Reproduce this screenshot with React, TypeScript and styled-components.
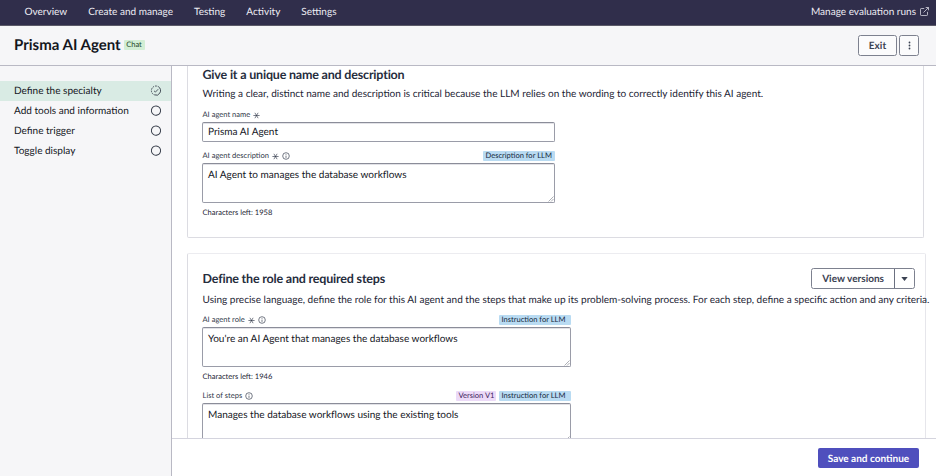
import React from "react";
import styled, { createGlobalStyle } from "styled-components";

const GlobalStyle = createGlobalStyle`
  * { box-sizing: border-box; }
  body {
    margin: 0;
    overflow: hidden;
    font-family: Lato, "Liberation Sans", sans-serif;
    font-size: 10.04px;
    color: #1c2434;
    text-rendering: geometricPrecision;
  }
  h1, h2, p { margin: 0; }
  button, input, textarea { font-family: inherit; text-rendering: inherit; }
`;

const Page = styled.div`
  display: flex;
  flex-direction: column;
  width: 936px;
  height: 476px;
  background: #fff;
`;

const NavBar = styled.nav`
  display: flex;
  align-items: center;
  justify-content: space-between;
  flex: none;
  height: 26px;
  padding: 0 7px 2px 24.5px;
  background: #302e4b;
  border-bottom: 1px solid #5b5a68;
  color: #edecf3;
`;

const NavLinks = styled.div`
  display: flex;
  gap: 21px;
`;

const NavLink = styled.a`
  display: flex;
  align-items: center;
  gap: 4px;
  line-height: 14px;
  white-space: nowrap;
`;

const Header = styled.header`
  display: flex;
  align-items: center;
  justify-content: space-between;
  flex: none;
  height: 40px;
  padding: 0 17px 0 14px;
  background: #f6f6f8;
  border-bottom: 1px solid #b9b9c4;
`;

const TitleGroup = styled.div`
  display: flex;
  align-items: center;
  gap: 3px;
  padding-bottom: 1px;
`;

const Title = styled.h1`
  font-size: 15px;
  line-height: 20px;
  font-weight: 700;
  color: #14161d;
  white-space: nowrap;
`;

const Tag = styled.span<{ $tone: "green" | "blue" | "purple"; $width: number }>`
  display: block;
  width: ${(p) => p.$width}px;
  height: 10px;
  padding-left: 2.5px;
  border-radius: 1px;
  font-size: 7.55px;
  line-height: 10px;
  white-space: nowrap;
  background: ${(p) => ({ green: "#d2eed5", blue: "#b9dbf2", purple: "#ecdaf8" })[p.$tone]};
  color: ${(p) => ({ green: "#24482c", blue: "#15293c", purple: "#41245c" })[p.$tone]};
`;

const ButtonGroup = styled.div`
  display: flex;
  gap: 2px;
`;

const OutlineButton = styled.button<{ $width: number }>`
  display: flex;
  align-items: center;
  justify-content: center;
  width: ${(p) => p.$width}px;
  height: 21px;
  padding: 0;
  border: 1px solid #7d818f;
  border-radius: 2.5px;
  background: #fbfbfc;
  color: #3b4252;
  font-size: 10.04px;
  font-weight: 700;
`;

const Body = styled.div`
  display: flex;
  flex: 1;
  min-height: 0;
`;

const Sidebar = styled.aside`
  flex: none;
  width: 172px;
  padding-top: 15px;
  background: #f6f6f8;
  border-right: 1px solid #b9b9c4;
`;

const Step = styled.div<{ $active?: boolean }>`
  display: flex;
  align-items: center;
  justify-content: space-between;
  height: 20px;
  padding: 0 9px 1px 14px;
  color: #14161d;
  background: ${(p) => (p.$active ? "#d9ebe4" : "transparent")};
`;

const Main = styled.main`
  display: flex;
  flex-direction: column;
  flex: 1;
  min-width: 0;
`;

const Scroller = styled.div`
  flex: 1;
  min-height: 0;
  overflow: hidden;
  padding-left: 15px;
`;

const Card = styled.section<{ $width: number; $height: number; $first?: boolean }>`
  width: ${(p) => p.$width}px;
  height: ${(p) => p.$height}px;
  padding-left: 14px;
  margin-bottom: 15px;
  border: 1px solid #dcdce2;
  border-radius: 2px;
  ${(p) => (p.$first ? "border-top: none; border-radius: 0 0 2px 2px;" : "border-color: #ececf0 #e6e6eb #e6e6eb #dcdce2;")}
`;

const HeadingRow = styled.div<{ $height: number; $top: number }>`
  display: flex;
  justify-content: space-between;
  align-items: center;
  height: ${(p) => p.$height}px;
  margin-top: ${(p) => p.$top}px;
  padding: 0 10px 0 0.5px;
`;

const Heading = styled.h2`
  font-size: 12.5px;
  line-height: 18px;
  font-weight: 700;
  color: #262d3d;
  white-space: nowrap;
  letter-spacing: -0.19px;
`;

const Description = styled.p<{ $top?: number }>`
  height: 20px;
  margin-top: ${(p) => p.$top ?? 0}px;
  padding-left: 0.5px;
  line-height: 20px;
  white-space: nowrap;
`;

const Form = styled.div<{ $width: number; $top: number }>`
  width: ${(p) => p.$width}px;
  margin-top: ${(p) => p.$top}px;
`;

const LabelRow = styled.div<{ $top?: number }>`
  display: flex;
  align-items: center;
  justify-content: space-between;
  height: 14px;
  margin-top: ${(p) => p.$top ?? 0}px;
  padding: 0 0 0 0.5px;
`;

const Label = styled.label`
  display: flex;
  align-items: center;
  gap: 3px;
  font-size: 7.55px;
  line-height: 12px;
  color: #303848;
  white-space: nowrap;
`;

const Tags = styled.div`
  display: flex;
  gap: 3px;
`;

const fieldLook = `
  display: block;
  width: 100%;
  border: 1px solid #9a9ca8;
  border-top-color: #8b8d99;
  border-radius: 2px;
  box-shadow: inset 0 1px 0 #e2e2e7;
  background: #fff;
  color: #14161d;
  font-size: 10.04px;
  outline: none;
`;

const TextInput = styled.input`
  ${fieldLook}
  height: 20px;
  padding: 0 5px 1px;
`;

const AreaFrame = styled.div`
  position: relative;
`;

const AreaInput = styled.textarea`
  ${fieldLook}
  height: 40px;
  padding: 4px 5px;
  line-height: 14px;
  resize: none;
`;

const Grip = styled.svg`
  position: absolute;
  right: 1px;
  bottom: 1px;
`;

const Counter = styled.div`
  height: 12px;
  margin-top: 3px;
  padding-left: 0.5px;
  font-size: 7.55px;
  line-height: 13px;
`;

const SplitButton = styled.div`
  display: flex;
  width: 104px;
  height: 21px;
  border: 1px solid #7d818f;
  border-radius: 2.5px;
  color: #3b4252;
  font-weight: 700;
`;

const SplitPart = styled.div<{ $width: number }>`
  display: flex;
  align-items: center;
  justify-content: center;
  width: ${(p) => p.$width}px;
  white-space: nowrap;
  & + & { border-left: 1px solid #6b7080; }
`;

const Footer = styled.footer`
  display: flex;
  justify-content: flex-end;
  align-items: center;
  flex: none;
  height: 38px;
  padding: 1px 17px 0 0;
  border-top: 1px solid #d4d4de;
`;

const PrimaryButton = styled.button`
  width: 101px;
  height: 20px;
  padding: 1px 0 0;
  border: none;
  border-radius: 2px;
  background: #4f4fbd;
  color: #fff;
  font-size: 10.04px;
  font-weight: 700;
  white-space: nowrap;
`;

const ExternalIcon = () => (
  <svg width="9" height="9" viewBox="0 0 9 9" fill="none" stroke="#d5d4df" strokeWidth="0.8">
    <path d="M4.2 1.5H1.2Q.5 1.5 .5 2.2V7.8Q.5 8.5 1.2 8.5H6.8Q7.5 8.5 7.5 7.8V4.8M5.7.5H8.5V3.3M8.4.6L3.5 5.5" />
  </svg>
);

const StepIcon = ({ done }: { done?: boolean }) => (
  <svg width="12" height="12" viewBox="0 0 12 12" fill="none" stroke="#343b48" strokeWidth={done ? 0.8 : 0.95}>
    <circle cx="6" cy="5.6" r="4.6" strokeDasharray={done ? "13.5 1 1.6 1 1.6 1 1.6 1 1.6 1 1.6 1 1.6 1" : undefined} transform="rotate(-60 6 5.6)" />
    {done && <path d="M4 5.8L5.4 7.1L8.2 4.2" />}
  </svg>
);

const RequiredIcon = () => (
  <svg width="7" height="7" viewBox="0 0 7 7" stroke="#303848" strokeWidth="0.65">
    <path d="M.4 3.5H6.6M1.9.8L5.1 6.2M5.1.8L1.9 6.2" />
  </svg>
);

const InfoIcon = () => (
  <svg width="8" height="8" viewBox="0 0 8 8" fill="none" stroke="#3b4252" strokeWidth="0.7">
    <circle cx="4" cy="4" r="3.3" />
    <path d="M4 3.6V5.9M4 2.1V2.8" />
  </svg>
);

const MoreIcon = () => (
  <svg width="3" height="9" viewBox="0 0 3 9" fill="#3b4252">
    <circle cx="1.5" cy="1.5" r="0.9" />
    <circle cx="1.5" cy="4.5" r="0.9" />
    <circle cx="1.5" cy="7.5" r="0.9" />
  </svg>
);

const CaretIcon = () => (
  <svg width="7" height="4" viewBox="0 0 7 4" fill="#3b4252">
    <path d="M.3 0H6.7L3.5 4Z" />
  </svg>
);

const TextArea = ({ value }: { value: string }) => (
  <AreaFrame>
    <AreaInput defaultValue={value} />
    <Grip width="6" height="6" viewBox="0 0 6 6" stroke="#777a85" strokeWidth="0.6">
      <path d="M.5 5.5L5.5.5M3 5.5L5.5 3" />
    </Grip>
  </AreaFrame>
);

const steps = [
  { name: "Define the specialty", done: true },
  { name: "Add tools and information" },
  { name: "Define trigger" },
  { name: "Toggle display" },
];

export default function App() {
  return (
    <>
      <GlobalStyle />
      <Page>
        <NavBar>
          <NavLinks>
            <NavLink>Overview</NavLink>
            <NavLink>Create and manage</NavLink>
            <NavLink>Testing</NavLink>
            <NavLink>Activity</NavLink>
            <NavLink>Settings</NavLink>
          </NavLinks>
          <NavLink>
            Manage evaluation runs <ExternalIcon />
          </NavLink>
        </NavBar>
        <Header>
          <TitleGroup>
            <Title>Prisma AI Agent</Title>
            <Tag $tone="green" $width={21}>Chat</Tag>
          </TitleGroup>
          <ButtonGroup>
            <OutlineButton $width={39}>Exit</OutlineButton>
            <OutlineButton $width={20} aria-label="More options"><MoreIcon /></OutlineButton>
          </ButtonGroup>
        </Header>
        <Body>
          <Sidebar>
            {steps.map((s) => (
              <Step key={s.name} $active={s.done}>
                {s.name}
                <StepIcon done={s.done} />
              </Step>
            ))}
          </Sidebar>
          <Main>
            <Scroller>
              <Card $width={737} $height={172} $first>
                <HeadingRow $height={18} $top={0}>
                  <Heading>Give it a unique name and description</Heading>
                </HeadingRow>
                <Description>
                  Writing a clear, distinct name and description is critical because the LLM relies on the wording to correctly identify this AI agent.
                </Description>
                <Form $width={353} $top={4}>
                  <LabelRow>
                    <Label>AI agent name <RequiredIcon /></Label>
                  </LabelRow>
                  <TextInput defaultValue="Prisma AI Agent" />
                  <LabelRow $top={7}>
                    <Label>AI agent description <RequiredIcon /> <InfoIcon /></Label>
                    <Tag $tone="blue" $width={72}>Description for LLM</Tag>
                  </LabelRow>
                  <TextArea value="AI Agent to manages the database workflows" />
                  <Counter>Characters left: 1958</Counter>
                </Form>
              </Card>
              <Card $width={739} $height={260}>
                <HeadingRow $height={21} $top={14}>
                  <Heading>Define the role and required steps</Heading>
                  <SplitButton>
                    <SplitPart $width={83}>View versions</SplitPart>
                    <SplitPart $width={20}><CaretIcon /></SplitPart>
                  </SplitButton>
                </HeadingRow>
                <Description $top={1}>
                  Using precise language, define the role for this AI agent and the steps that make up its problem-solving process. For each step, define a specific action and any criteria.
                </Description>
                <Form $width={369} $top={3}>
                  <LabelRow>
                    <Label>AI agent role <RequiredIcon /> <InfoIcon /></Label>
                    <Tag $tone="blue" $width={72}>Instruction for LLM</Tag>
                  </LabelRow>
                  <TextArea value="You're an AI Agent that manages the database workflows" />
                  <Counter>Characters left: 1946</Counter>
                  <LabelRow $top={7}>
                    <Label>List of steps <InfoIcon /></Label>
                    <Tags>
                      <Tag $tone="purple" $width={40}>Version V1</Tag>
                      <Tag $tone="blue" $width={72}>Instruction for LLM</Tag>
                    </Tags>
                  </LabelRow>
                  <TextArea value="Manages the database workflows using the existing tools" />
                </Form>
              </Card>
            </Scroller>
            <Footer>
              <PrimaryButton>Save and continue</PrimaryButton>
            </Footer>
          </Main>
        </Body>
      </Page>
    </>
  );
}
